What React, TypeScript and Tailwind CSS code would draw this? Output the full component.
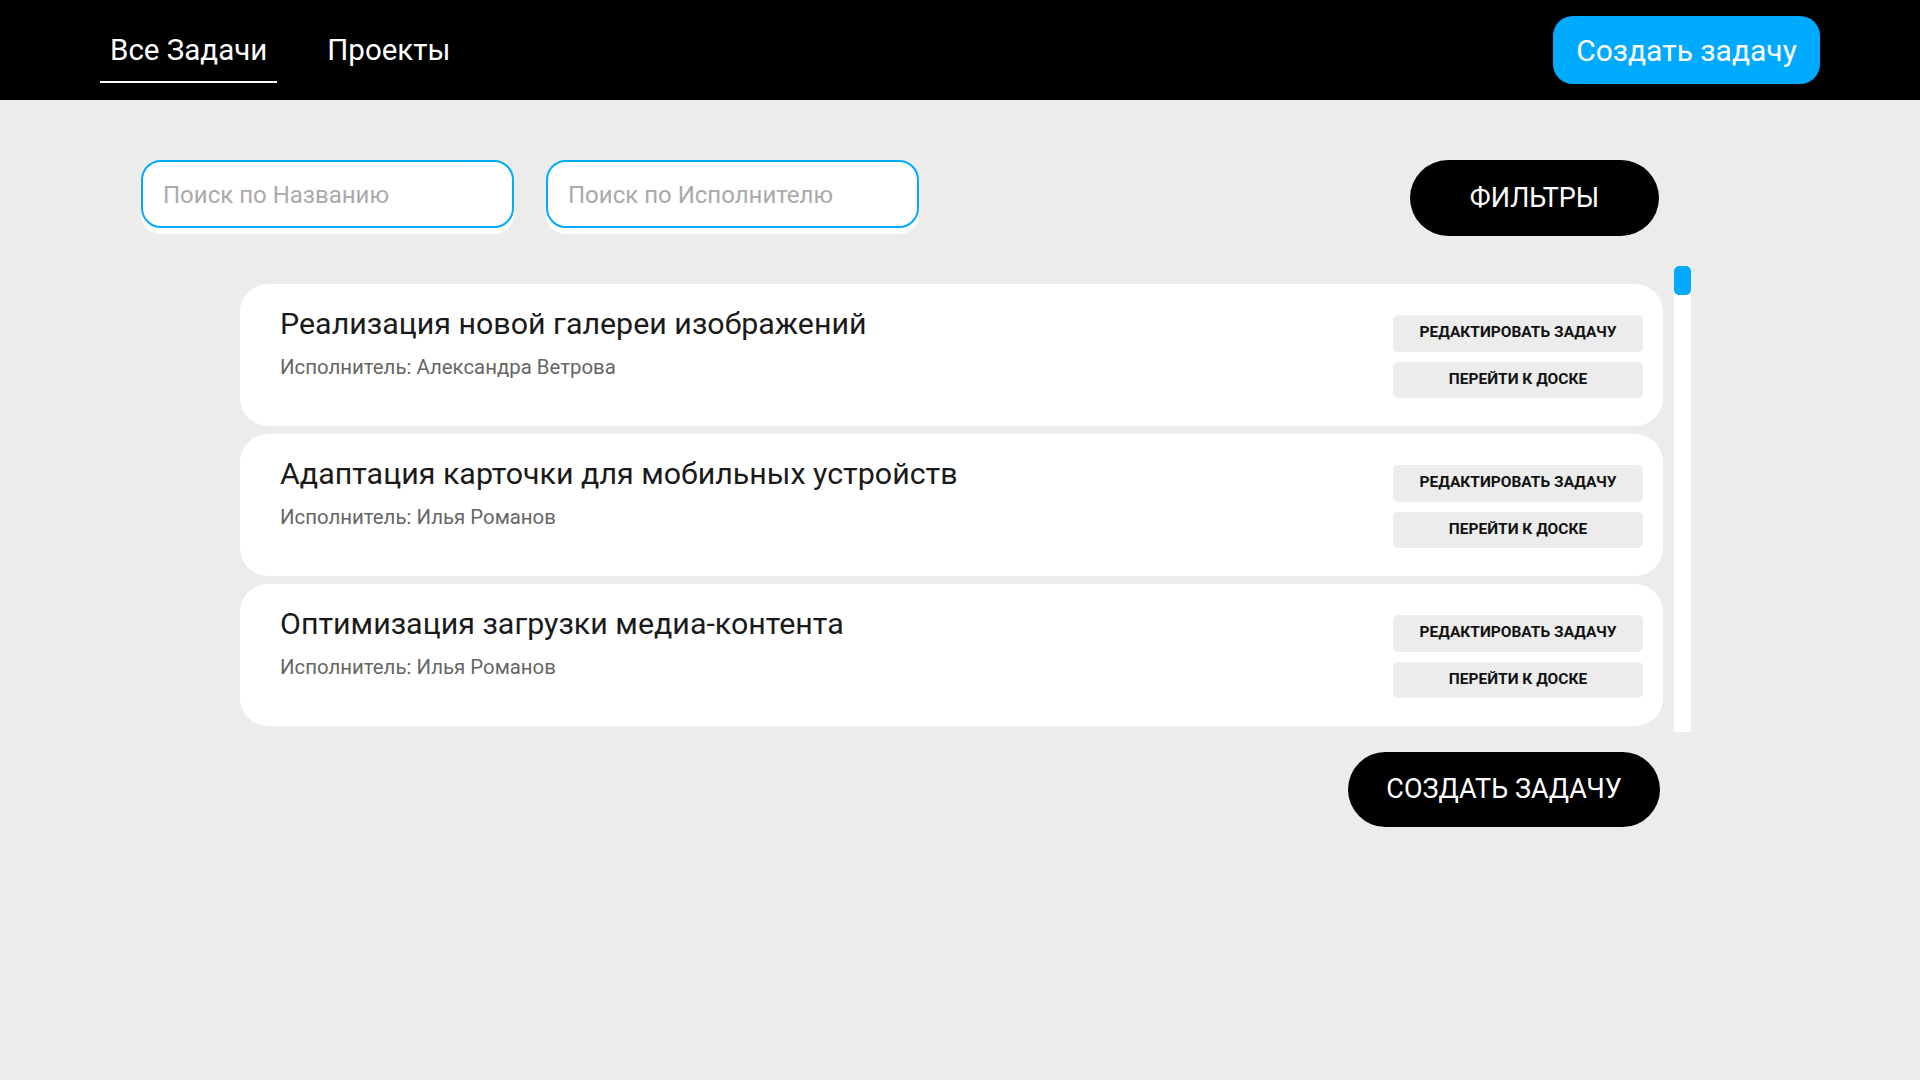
import React from "react";

type Task = {
  title: string;
  assignee: string;
};

const tasks: Task[] = [
  { title: "Реализация новой галереи изображений", assignee: "Александра Ветрова" },
  { title: "Адаптация карточки для мобильных устройств", assignee: "Илья Романов" },
  { title: "Оптимизация загрузки медиа-контента", assignee: "Илья Романов" },
];

const TaskCard: React.FC<{ task: Task }> = ({ task }) => {
  return (
    <div className="shrink-0 h-[142px] bg-white rounded-[28px] pl-[40px] pr-[20px] flex items-center justify-between">
      <div className="self-start pt-[22px]">
        <div className="text-[30.4px] leading-[36px] text-[#1a1a1a]">{task.title}</div>
        <div className="mt-[13px] text-[20.4px] leading-[24px] text-[#666666]">
          Исполнитель: {task.assignee}
        </div>
      </div>
      <div className="w-[250px] mt-[2px] flex flex-col gap-[10px]">
        <button className="h-[37px] rounded-[5px] bg-[#ececec] text-[15.5px] font-bold text-[#111111] uppercase">
          Редактировать задачу
        </button>
        <button className="h-[36px] rounded-[5px] bg-[#ececec] text-[15.5px] font-bold text-[#111111] uppercase">
          Перейти к доске
        </button>
      </div>
    </div>
  );
};

const App: React.FC = () => {
  return (
    <div className="min-h-screen bg-[#ececec] font-['Roboto',sans-serif]">
      <header className="h-[100px] bg-black flex justify-between pl-[100px] pr-[100px]">
        <nav className="flex items-end gap-[40px] pb-[17px]">
          <a className="px-[10px] pb-[13px] border-b-2 border-white text-[29.5px] leading-[36px] text-white">
            Все Задачи
          </a>
          <a className="px-[10px] pb-[13px] border-b-2 border-transparent text-[29.5px] leading-[36px] text-white">
            Проекты
          </a>
        </nav>
        <div className="flex items-center">
          <button className="h-[68px] w-[267px] rounded-[20px] bg-[#00aaff] text-[30px] text-white">
            Создать задачу
          </button>
        </div>
      </header>

      <main className="pt-[60px]">
        <div className="flex items-start pl-[141px] w-[1659px]">
          <input
            placeholder="Поиск по Названию"
            className="w-[373px] h-[68px] rounded-[20px] border-2 border-[#00aaff] bg-white pl-[20px] pt-[2px] text-[24px] text-[#333] placeholder:text-[#aaaaaa] outline-none shadow-[0_6px_1px_#ffffff]"
          />
          <input
            placeholder="Поиск по Исполнителю"
            className="ml-[32px] w-[373px] h-[68px] rounded-[20px] border-2 border-[#00aaff] bg-white pl-[20px] pt-[2px] text-[24px] text-[#333] placeholder:text-[#aaaaaa] outline-none shadow-[0_6px_1px_#ffffff]"
          />
          <button className="ml-auto w-[249px] h-[76px] rounded-full bg-black text-[27px] text-white uppercase">
            Фильтры
          </button>
        </div>

        <div className="mt-[30px] flex pl-[240px]">
          <div className="w-[1423px] h-[466px] overflow-hidden pt-[18px] flex flex-col gap-[8px]">
            {tasks.map((t, i) => (
              <TaskCard key={i} task={t} />
            ))}
          </div>
          <div className="ml-[11px] w-[17px] h-[466px] bg-white">
            <div className="h-[29px] rounded-[5px] bg-[#00aaff]" />
          </div>
        </div>

        <div className="flex w-[1660px] justify-end mt-[20px]">
          <button className="w-[312px] h-[75px] rounded-full bg-black text-[27px] text-white uppercase">
            Создать задачу
          </button>
        </div>
      </main>
    </div>
  );
};

export default App;
